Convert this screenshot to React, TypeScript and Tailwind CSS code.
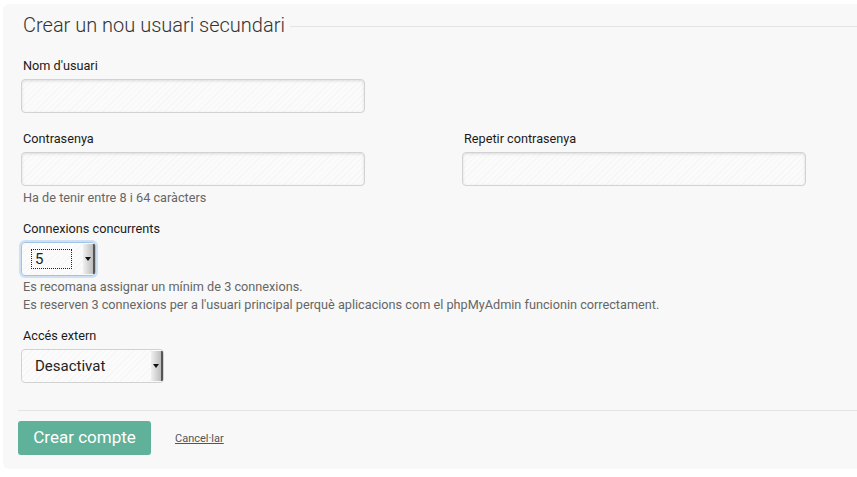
import React from 'react';

const stripes =
  'bg-[repeating-linear-gradient(135deg,#fbfbfb_0px,#fbfbfb_3px,#f6f6f6_3px,#f6f6f6_4px)]';

function Field({ label, className = '' }: { label: string; className?: string }) {
  return (
    <div className={className}>
      <label className="block pl-[2px] text-[12.7px] leading-[16px] text-[#1a1a1a]">{label}</label>
      <div
        className={`mt-[5px] h-[34px] w-[344px] rounded-[4px] border border-[#d2d2d2] shadow-[inset_0_1px_3px_rgba(0,0,0,0.12)] ${stripes}`}
      />
    </div>
  );
}

function FakeSelect({ value, width, focused }: { value: string; width: string; focused?: boolean }) {
  return (
    <div
      className={`flex h-[34px] ${width} items-stretch overflow-hidden rounded-[4px] border ${
        focused ? 'border-[#9ec3e6] shadow-[0_0_0_2px_#cfe0f2]' : 'border-[#d2d2d2]'
      } ${stripes}`}
    >
      <div className="flex flex-1 items-center pl-[9px]">
        {focused ? (
          <span className="flex h-[20px] w-[41px] items-center border border-dotted border-[#222] pl-[3px] text-[15px] text-[#222]">
            {value}
          </span>
        ) : (
          <span className="pl-[4px] text-[15px] text-[#222]">{value}</span>
        )}
      </div>
      <div className="my-[1px] flex w-[12px] items-center justify-center border-r-2 border-[#555] bg-[linear-gradient(90deg,#f0f0f0,#bdbdbd)]">
        <svg width="6" height="4" viewBox="0 0 6 4">
          <path d="M0 0h6L3 4z" fill="#111" />
        </svg>
      </div>
    </div>
  );
}

export default function App() {
  return (
    <div className="h-[477px] w-full bg-white pt-[4px] pl-[3px] font-['Roboto',sans-serif]">
      <div className="h-[465px] rounded-l-[6px] bg-[#f8f8f8] pt-[9px]">
        {/* titol */}
        <div className="flex items-center pl-[20px]">
          <h2 className="text-[20px] font-light leading-[24px] text-[#333]">Crear un nou usuari secundari</h2>
          <div className="ml-[5px] mt-[3px] h-px flex-1 bg-[#e4e4e4]" />
        </div>

        <div className="pl-[18px]">
          <Field label="Nom d'usuari" className="mt-[21px]" />

          <div className="mt-[18px] grid grid-cols-[441px_1fr]">
            <div>
              <Field label="Contrasenya" />
              <p className="mt-[4px] pl-[2px] text-[12.7px] leading-[16px] text-[#666]">Ha de tenir entre 8 i 64 caràcters</p>
            </div>
            <Field label="Repetir contrasenya" />
          </div>

          <label className="mt-[15px] block pl-[2px] text-[12.7px] leading-[16px] text-[#1a1a1a]">Connexions concurrents</label>
          <div className="mt-[5px]">
            <FakeSelect value="5" width="w-[75px]" focused />
          </div>
          <div className="mt-[2px] pl-[2px] text-[12.7px] leading-[18px] text-[#666]">
            <p>Es recomana assignar un mínim de 3 connexions.</p>
            <p>Es reserven 3 connexions per a l'usuari principal perquè aplicacions com el phpMyAdmin funcionin correctament.</p>
          </div>

          <label className="mt-[14px] block pl-[2px] text-[12.7px] leading-[16px] text-[#1a1a1a]">Accés extern</label>
          <div className="mt-[5px]">
            <FakeSelect value="Desactivat" width="w-[143px]" />
          </div>
        </div>

        {/* peu */}
        <div className="ml-[15px] mt-[27px] h-px bg-[#e4e4e4]" />
        <div className="mt-[10px] flex items-center pl-[15px]">
          <button className="h-[34px] w-[133px] rounded-[3px] bg-[#5fb199] text-[17px] text-white">Crear compte</button>
          <a className="ml-[24px] mt-[3px] text-[11px] text-[#555] underline">Cancel·lar</a>
        </div>
      </div>
    </div>
  );
}
